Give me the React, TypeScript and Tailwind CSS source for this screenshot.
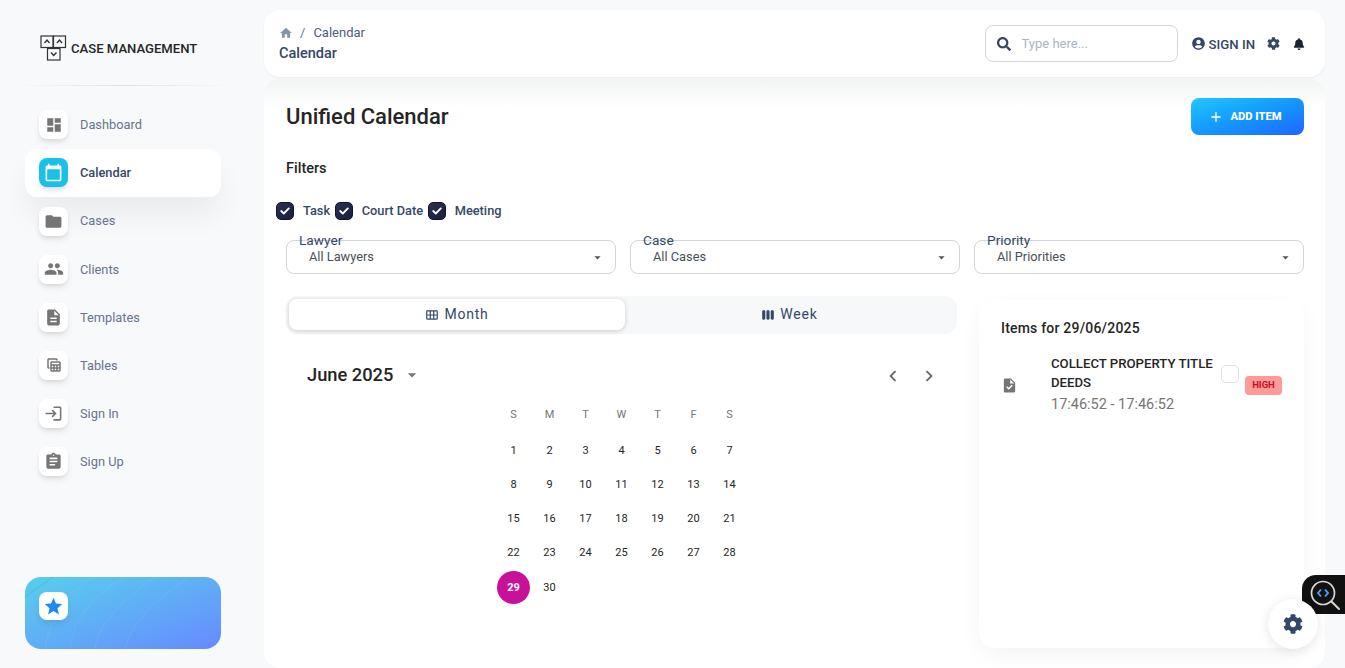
import { ReactNode } from "react";
import {
  MdDashboard, MdCalendarToday, MdFolder, MdPeople, MdDescription, MdTableView, MdLogin, MdAssignment,
  MdStar, MdHome, MdAdd, MdArrowDropDown, MdChevronLeft, MdChevronRight, MdCalendarViewMonth, MdViewWeek, MdTask,
} from "react-icons/md";
import { FaSearch, FaUserCircle, FaCog, FaBell } from "react-icons/fa";

function Logo() {
  return (
    <svg width="27" height="27" viewBox="0 0 27 27" fill="none" stroke="#333" strokeWidth="1.2" className="shrink-0">
      <rect x="1" y="1" width="12" height="11.5" />
      <rect x="13.5" y="1" width="12" height="11.5" />
      <rect x="7.5" y="13.5" width="12.5" height="11.5" />
      <path d="M4.5 8 L7 5 L9.5 8" strokeWidth="1.4" />
      <path d="M17 8 L19.5 5 L22 8" strokeWidth="1.4" />
      <path d="M11 17.5 L13.7 20.5 L16.5 17.5" strokeWidth="1.4" />
    </svg>
  );
}

function NavItem({ icon, label, active }: { icon: ReactNode; label: string; active?: boolean }) {
  return (
    <div className={`flex items-center h-[48.1px] w-[196px] pl-[14px] rounded-xl ${active ? "bg-white shadow-[0_20px_27px_0_rgba(0,0,0,0.05)]" : ""}`}>
      <div className={`w-[29px] h-[29px] rounded-lg flex items-center justify-center shadow-[0_4px_6px_-1px_rgba(0,0,0,0.1),0_2px_4px_-1px_rgba(0,0,0,0.06)] ${active ? "bg-[#1ac0e8] text-white" : "bg-white text-[#757575]"}`}>
        {icon}
      </div>
      <span className={`ml-[12px] text-[12.8px] ${active ? "font-medium text-[#344767]" : "text-[#67748e]"}`}>{label}</span>
    </div>
  );
}

function Sidebar() {
  return (
    <aside className="w-[264px] shrink-0 h-full flex flex-col">
      <div className="flex items-center h-[85px] pl-[40px] pt-[12px] gap-[4px]">
        <Logo />
        <span className="text-[13.1px] font-medium text-[#252525]">CASE MANAGEMENT</span>
      </div>
      <div className="ml-[13px] w-[222px] h-px bg-gradient-to-r from-transparent via-[#e2e3e6] to-transparent" />
      <nav className="ml-[25px] mt-[14.8px] flex flex-col">
        <NavItem icon={<MdDashboard size={18} />} label="Dashboard" />
        <NavItem active icon={<MdCalendarToday size={19} />} label="Calendar" />
        <NavItem icon={<MdFolder size={19} />} label="Cases" />
        <NavItem icon={<MdPeople size={20} />} label="Clients" />
        <NavItem icon={<MdDescription size={19} />} label="Templates" />
        <NavItem icon={<MdTableView size={18} />} label="Tables" />
        <NavItem icon={<MdLogin size={19} />} label="Sign In" />
        <NavItem icon={<MdAssignment size={19} />} label="Sign Up" />
      </nav>
      <div className="relative overflow-hidden mt-auto mb-[19px] ml-[25px] w-[196px] h-[72px] rounded-2xl bg-gradient-to-br from-[#57cfea] to-[#6689ff] pt-[15px] pl-[14px]">
        <svg className="absolute inset-0" width="196" height="72" viewBox="0 0 196 72" fill="none" stroke="#ffffff" strokeOpacity="0.08">
          <path d="M20 72 C25 40 40 15 70 0" />
          <path d="M45 72 C48 45 65 20 100 0" />
          <path d="M70 72 C72 50 95 25 130 0" />
          <path d="M100 72 C105 50 125 25 165 0" />
          <path d="M0 20 C10 12 20 6 28 0" stroke="#2aa6c8" strokeOpacity="0.35" />
        </svg>
        <div className="relative w-[29px] h-[28px] rounded-lg bg-white flex items-center justify-center shadow-[0_4px_6px_-1px_rgba(0,0,0,0.1)]">
          <MdStar size={21} className="text-[#1e88f5]" />
        </div>
      </div>
    </aside>
  );
}

function Header() {
  return (
    <header className="relative z-10 h-[67px] rounded-2xl bg-white shadow-[0_1px_2px_rgba(0,0,0,0.06)] flex items-center pl-[15px] pr-[20px] shrink-0">
      <div className="flex flex-col">
        <div className="flex items-center text-[13px] text-[#4f5d7d] leading-[18px]">
          <MdHome size={14} className="text-[#8a94a8]" />
          <span className="ml-[7px] text-[#67748e]">/</span>
          <span className="ml-[8px]">Calendar</span>
        </div>
        <div className="text-[14.5px] font-medium text-[#344767] leading-[20px] mt-[2px]">Calendar</div>
      </div>
      <div className="ml-auto w-[193px] h-[37px] rounded-lg border border-[#d2d6da] flex items-center pl-[11px]">
        <FaSearch size={14} className="text-[#344767]" />
        <span className="ml-[11px] text-[13px] text-[#adb5c4]">Type here...</span>
      </div>
      <div className="ml-[14px] flex items-center text-[#344767] mt-[1px]">
        <FaUserCircle size={13} />
        <span className="ml-[4px] text-[13.2px] font-medium mt-[1px]">SIGN IN</span>
        <FaCog size={13} className="ml-[12px]" />
        <FaBell size={12} className="ml-[13px] text-[#1c2233]" />
      </div>
    </header>
  );
}

function Check({ label }: { label: string }) {
  return (
    <div className="flex items-center">
      <div className="w-[18px] h-[18px] rounded-[5px] bg-gradient-to-br from-[#2b2f52] to-[#1b1f3c] border border-[#111426] flex items-center justify-center">
        <svg width="10" height="8" viewBox="0 0 10 8" fill="none" stroke="#ffffff" strokeWidth="1.8" strokeLinecap="round" strokeLinejoin="round">
          <path d="M1.2 4 L3.8 6.5 L8.8 1.4" />
        </svg>
      </div>
      <span className="ml-[9px] text-[12.8px] font-medium text-[#344767]">{label}</span>
    </div>
  );
}

function Select({ label, value }: { label: string; value: string }) {
  return (
    <div className="relative flex-1 h-[34px] rounded-lg border border-[#d2d6da] flex items-center pl-[22px] pr-[10px]">
      <span className="absolute left-[12px] -top-[9px] text-[13.7px] leading-[16px] text-[#344767]">{label}</span>
      <span className="text-[12.8px] text-[#495057]">{value}</span>
      <MdArrowDropDown size={15} className="ml-auto text-[#555]" />
    </div>
  );
}

const weeks = [
  [1, 2, 3, 4, 5, 6, 7],
  [8, 9, 10, 11, 12, 13, 14],
  [15, 16, 17, 18, 19, 20, 21],
  [22, 23, 24, 25, 26, 27, 28],
  [29, 30],
];

function CalendarView() {
  return (
    <div className="mt-[22px]">
      <div className="flex items-center h-[36px] pl-[21px] pr-[17px]">
        <span className="text-[18.3px] font-medium text-[#252525] mt-[2px]">June 2025</span>
        <MdArrowDropDown size={20} className="ml-[9px] mt-[2px] text-[#757575]" />
        <MdChevronLeft size={22} className="ml-auto mt-[3px] text-[#666]" />
        <MdChevronRight size={22} className="ml-[14px] mt-[3px] text-[#666]" />
      </div>
      <div className="w-[252px] mx-auto mt-[13px]">
        <div className="grid grid-cols-7 h-[20px] items-center text-center text-[11px] text-[#757575]">
          {["S", "M", "T", "W", "T", "F", "S"].map((d, i) => (
            <span key={i}>{d}</span>
          ))}
        </div>
        <div className="mt-[9px] flex flex-col">
          {weeks.map((w, i) => (
            <div key={i} className={`grid grid-cols-7 ${i === 3 ? "h-[35px]" : "h-[34px]"} items-center text-center text-[11px] text-[#252525]`}>
              {w.map((d) =>
                d === 29 ? (
                  <span key={d} className="justify-self-center w-[33px] h-[33px] mb-[2px] pt-[2px] rounded-full bg-[#c9109a] text-white font-bold flex items-center justify-center">{d}</span>
                ) : (
                  <span key={d}>{d}</span>
                )
              )}
            </div>
          ))}
        </div>
      </div>
    </div>
  );
}

function ItemsPanel() {
  return (
    <div className="w-[325px] h-[348px] mt-[4px] shrink-0 rounded-2xl bg-white shadow-[0_8px_26px_-4px_rgba(20,20,20,0.06)] pl-[22px] pr-[22px] pt-[18px]">
      <div className="text-[14px] font-medium text-[#252525] tracking-[0.2px] leading-[20px]">Items for 29/06/2025</div>
      <div className="flex mt-[16px]">
        <div className="w-[50px] shrink-0 pt-[23px]">
          <MdTask size={17} className="text-[#757575]" />
        </div>
        <div className="w-[170px] shrink-0">
          <div className="text-[13.2px] font-medium text-[#252525] leading-[19px]">COLLECT PROPERTY TITLE DEEDS</div>
          <div className="text-[14.5px] text-[#757575] leading-[20px] mt-[3px]">17:46:52 - 17:46:52</div>
        </div>
        <div className="w-[18px] h-[18px] mt-[11px] shrink-0 rounded-[5px] border border-[#dee2e6]" />
        <div className="ml-[6px] mt-[22px] w-[37px] h-[19px] shrink-0 rounded-[4px] bg-[#ff9a9a] text-[#c9101a] text-[9.5px] font-bold flex items-center justify-center">HIGH</div>
      </div>
    </div>
  );
}

export default function App() {
  return (
    <div className="relative flex h-[668px] w-full overflow-hidden bg-[#f8f9fa] font-['Roboto',sans-serif]">
      <Sidebar />
      <main className="flex-1 min-w-0 flex flex-col pt-[10px] pr-[20px]">
        <Header />
        <section className="relative mt-[2px] flex-1 rounded-2xl bg-gradient-to-b from-[#f2f3f4] to-white to-[28px] pl-[22px] pr-[21px] flex flex-col">
          <div className="flex items-center justify-between pt-[19px]">
            <h1 className="text-[22px] font-medium text-[#252525]">Unified Calendar</h1>
            <button className="w-[113px] h-[37px] rounded-lg bg-gradient-to-br from-[#24c6fc] to-[#2164ff] text-white text-[11.2px] font-extrabold flex items-center justify-center pr-[5px]">
              <MdAdd size={16} className="mr-[6px]" />
              <span className="mt-[1px]">ADD ITEM</span>
            </button>
          </div>
          <div className="text-[14.5px] font-medium text-[#252525] leading-[20px] mt-[24px]">Filters</div>
          <div className="flex gap-[4.6px] -ml-[10px] mt-[23px] h-[18px]">
            <Check label="Task" />
            <Check label="Court Date" />
            <Check label="Meeting" />
          </div>
          <div className="flex gap-[14px] mt-[20px]">
            <Select label="Lawyer" value="All Lawyers" />
            <Select label="Case" value="All Cases" />
            <Select label="Priority" value="All Priorities" />
          </div>
          <div className="flex mt-[22px] gap-[22px]">
            <div className="flex-1 min-w-0">
              <div className="h-[38px] rounded-xl bg-[#f6f8fa] flex p-[3px] text-[14px] text-[#344767] tracking-[0.8px]">
                <div className="w-[336px] shrink-0 h-[31px] rounded-lg bg-white shadow-[0_1px_5px_rgba(0,0,0,0.18)] flex items-center justify-center gap-[5px]">
                  <MdCalendarViewMonth size={14} />
                  Month
                </div>
                <div className="flex-1 flex items-center justify-center gap-[5px] pb-[1px]">
                  <MdViewWeek size={14} />
                  Week
                </div>
              </div>
              <CalendarView />
            </div>
            <ItemsPanel />
          </div>
        </section>
      </main>
      <div className="absolute right-0 top-[575px] w-[43px] h-[39px] rounded-l-[14px] bg-[#111] flex items-center justify-center">
        <svg width="36" height="36" viewBox="0 0 36 36" fill="none" className="ml-[3px]">
          <circle cx="16" cy="16" r="11.5" stroke="#d8d8d8" strokeWidth="1.7" />
          <path d="M24.5 24.5 L32 32" stroke="#d8d8d8" strokeWidth="2" strokeLinecap="round" />
          <path d="M14 12.5 L11 16 L14 19.5" stroke="#4aa0f7" strokeWidth="1.9" />
          <path d="M18 12.5 L21 16 L18 19.5" stroke="#4aa0f7" strokeWidth="1.9" />
        </svg>
      </div>
      <div className="absolute left-[1268px] top-[599px] w-[50px] h-[50px] rounded-full bg-white shadow-[0_2px_12px_rgba(0,0,0,0.1)] flex items-center justify-center">
        <FaCog size={20} className="text-[#344767]" />
      </div>
    </div>
  );
}
